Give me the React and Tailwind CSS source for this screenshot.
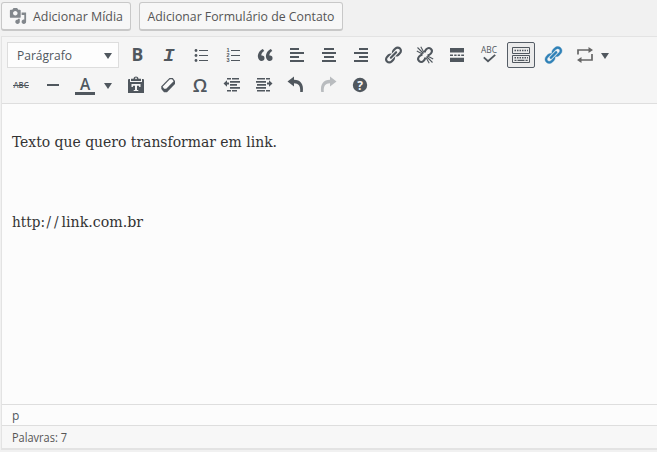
import React from "react";

const LINK =
  "M17.74 2.76c1.68 1.69 1.68 4.41 0 6.1l-1.53 1.52c-1.12 1.12-2.7 1.47-4.14 1.09l2.62-2.61.76-.77.76-.76c.84-.84.84-2.2 0-3.04-.84-.85-2.2-.85-3.04 0l-.77.76-3.38 3.38c-.37-1.44-.02-3.02 1.1-4.14l1.52-1.53c1.69-1.68 4.42-1.68 6.1 0zM8.59 13.43l5.34-5.34c.42-.42.42-1.1 0-1.52-.44-.43-1.13-.39-1.53 0l-5.33 5.34c-.42.42-.42 1.1 0 1.52.44.43 1.13.39 1.52 0zm-.76 2.29l4.14-4.15c.38 1.44.03 3.02-1.09 4.14l-1.52 1.53c-1.69 1.68-4.41 1.68-6.1 0-1.68-1.68-1.68-4.42 0-6.1l1.53-1.52c1.12-1.12 2.7-1.47 4.14-1.1l-4.14 4.15c-.85.84-.85 2.2 0 3.05.84.84 2.2.84 3.04 0z";

function Icon({ children, className = "" }) {
  return (
    <svg viewBox="0 0 20 20" fill="currentColor" className={"h-5 w-5 shrink-0 overflow-visible " + className}>
      {children}
    </svg>
  );
}

function Tool({ children, active, className = "" }) {
  return (
    <button
      className={
        "flex h-[26px] w-7 shrink-0 items-center justify-center rounded-[2px] border " +
        (active ? "border-[#555d66] bg-[#ebebeb] " : "border-transparent ") +
        className
      }
    >
      {children}
    </button>
  );
}

const Caret = ({ className = "" }) => (
  <svg viewBox="0 0 8 6" fill="#50575e" className={"h-1.5 w-2 shrink-0 " + className}>
    <path d="M0 0h8L4 6z" />
  </svg>
);

const Undo = () => <path d="M8 1.5v3.200c6.500 0 10 4.300 8.800 12.300h-2.600c.5-6-1.700-8.700-6.200-8.700v3.200L1.500 6.500z" />;

export default function App() {
  return (
    <div className="flex h-[452px] w-[657px] flex-col overflow-hidden bg-[#f1f1f1] font-['Open_Sans','Noto_Sans',sans-serif] text-[#50575e]">
      <div className="flex h-9 shrink-0 gap-2 pl-px pt-0.5">
        <button className="flex h-[29px] w-[130px] items-center rounded-[3px] border border-b-2 border-[#c8c8c8] bg-[#f7f7f7] pl-[7px]">
          <Icon className="mr-[6px] h-[18px] w-[18px] text-[#82878c]">
            <path d="M13 11V4c0-.55-.45-1-1-1h-1.670L9 1H5L3.670 3H2c-.55 0-1 .45-1 1v7c0 .55.45 1 1 1h10c.55 0 1-.45 1-1zM7 4.500c1.380 0 2.500 1.120 2.500 2.500S8.380 9.500 7 9.500 4.500 8.380 4.500 7 5.620 4.500 7 4.500zM14 6h5v10.500c0 1.380-1.120 2.500-2.500 2.500S14 17.880 14 16.500s1.120-2.500 2.500-2.500c.17 0 .34.02.5.05V9h-3V6zm-4 8.050V13h2v3.500c0 1.380-1.120 2.500-2.500 2.500S7 17.880 7 16.500 8.120 14 9.500 14c.17 0 .34.02.5.05z" />
          </Icon>
          <svg className="h-5 w-[90px] overflow-visible" fill="#555">
            <text x="0" y="15" fontSize="13" textLength="90" lengthAdjust="spacingAndGlyphs">Adicionar Mídia</text>
          </svg>
        </button>
        <button className="flex h-[29px] w-[204px] items-center rounded-[3px] border border-b-2 border-[#c8c8c8] bg-[#f7f7f7] pl-[7px]">
          <svg className="h-5 w-[188px] overflow-visible" fill="#555">
            <text x="0.5" y="15" fontSize="13" textLength="187" lengthAdjust="spacingAndGlyphs">Adicionar Formulário de Contato</text>
          </svg>
        </button>
      </div>

      <div className="ml-px flex h-[414px] shrink-0 flex-col border-b-2 border-l border-t border-[#e3e3e3] bg-[#fcfcfc]">
        <div className="flex h-[67px] shrink-0 flex-col gap-1 border-b border-[#dedede] bg-[#f5f5f5] pt-[5px]">
          <div className="flex h-[26px] items-center gap-1 pl-[5px]">
            <button className="flex h-[26px] w-28 items-center justify-between border border-[#ddd] bg-[#fdfdfd] pl-[9px] pr-[6px]">
              <svg className="h-5 w-[56px] overflow-visible" fill="#50575e">
                <text x="0" y="15" fontSize="12.500" textLength="55" lengthAdjust="spacingAndGlyphs">Parágrafo</text>
              </svg>
              <Caret className="mt-px" />
            </button>
            <Tool>
              <Icon><text x="10.500" y="16.300" textAnchor="middle" fontSize="17.500" fontWeight="700">B</text></Icon>
            </Tool>
            <Tool>
              <Icon><text x="10" y="16.300" textAnchor="middle" fontSize="19" fontWeight="700" fontStyle="italic" fontFamily="Liberation Mono">I</text></Icon>
            </Tool>
            <Tool>
              <Icon>
                <circle cx="5" cy="5.500" r="1.400" /><circle cx="5" cy="10.500" r="1.400" /><circle cx="5" cy="15.500" r="1.400" />
                <path d="M8 5h9v1H8zM8 10h9v1H8zM8 15h9v1H8z" />
              </Icon>
            </Tool>
            <Tool>
              <Icon>
                <path d="M8 5h9v1H8zM8 10h9v1H8zM8 15h9v1H8z" />
                <g fontSize="5.500" fontWeight="700" fontFamily="Liberation Sans">
                  <text x="3.500" y="7">1</text><text x="3.500" y="12.200">2</text><text x="3.500" y="17.400">3</text>
                </g>
              </Icon>
            </Tool>
            <Tool>
              <Icon>
                <path d="M9.490 13.220c0-.74-.2-1.380-.61-1.900-.62-.78-1.830-.88-2.530-.72-.29-1.650 1.110-3.750 2.920-4.650L7.880 4c-2.730 1.300-5.420 4.280-4.960 8.050C3.210 14.430 4.590 16 6.540 16c.85 0 1.560-.25 2.120-.75s.83-1.180.83-2.030zm8.050 0c0-.74-.2-1.380-.61-1.900-.63-.78-1.830-.88-2.530-.72-.29-1.650 1.110-3.750 2.920-4.650L15.930 4c-2.730 1.300-5.410 4.280-4.950 8.050.29 2.380 1.660 3.950 3.610 3.950.85 0 1.560-.25 2.120-.75s.83-1.180.83-2.030z" />
              </Icon>
            </Tool>
            <Tool><Icon><path d="M3 3h9v2H3zM3 7h14v2H3zM3 11h9v2H3zM3 15h14v2H3z" /></Icon></Tool>
            <Tool><Icon><path d="M5 3h10v2H5zM3 7h14v2H3zM5 11h10v2H5zM3 15h14v2H3z" /></Icon></Tool>
            <Tool><Icon><path d="M8 3h9v2H8zM3 7h14v2H3zM8 11h9v2H8zM3 15h14v2H3z" /></Icon></Tool>
            <Tool><Icon><path d={LINK} /></Icon></Tool>
            <Tool>
              <Icon>
                <g fill="none" stroke="currentColor">
                  <path strokeWidth="2" d="M9.800 7.500c0-1.500.5-2.200 1.500-3.200 3-3 7.500.5 4.700 4-1 1.200-1.800 1.900-3.500 1.900M10.200 12.500c0 1.500-.5 2.200-1.500 3.200-3 3-7.500-.5-4.700-4 1-1.200 1.800-1.900 3.500-1.900" />
                  <path strokeWidth="1.100" d="M2.500 2.500L8.500 8.500M5.800 1.800l3 5.500M1.800 6L7.500 9M17.500 17.500l-6-6M14.200 18.200l-3-5.500M18.200 14l-5.700-3" />
                </g>
              </Icon>
            </Tool>
            <Tool><Icon><path d="M3 3h14v4.500H3zM3 9.500h3v1.500H3zM7.200 9.500h2.400v1.500H7.200zM10.700 9.500h2.400v1.500h-2.400zM14.200 9.500H17v1.500h-2.800zM3 12.800h14V17H3z" /></Icon></Tool>
            <Tool>
              <Icon>
                <text x="10" y="8" textAnchor="middle" fontSize="8.500" textLength="16" lengthAdjust="spacingAndGlyphs">ABC</text>
                <path fill="none" stroke="currentColor" strokeWidth="1.800" d="M4.800 12.300l4.200 3.900 7.200-6.400" />
              </Icon>
            </Tool>
            <Tool active>
              <Icon>
                <path fill="none" stroke="currentColor" d="M1.500 2.500h17v6h-17zM1.500 10.500h17v7h-17z" />
                <path fill="none" stroke="currentColor" strokeWidth="1.600" strokeDasharray="1.500 1" d="M3.500 5.500h13.500M3.500 12.800h13.500" />
                <path fill="none" stroke="currentColor" strokeWidth="1.300" d="M3.500 15.300h2M6.500 15.300h7M14.500 15.300h2.200" />
              </Icon>
            </Tool>
            <Tool><Icon className="text-[#2f81b7]"><path stroke="currentColor" strokeWidth=".4" d={LINK} /></Icon></Tool>
            <Tool>
              <Icon className="text-[#666]">
                <path fill="none" stroke="currentColor" strokeWidth="1.700" d="M3 9.500V5h11M17 9V15H6" />
                <path d="M13.500 2l4.500 3-4.500 3zM6.500 12L2 15l4.500 3z" />
              </Icon>
            </Tool>
            <Caret className="-ml-0.5 mt-0.5" />
          </div>

          <div className="flex h-[26px] items-center gap-1 pl-[5px]">
            <Tool>
              <Icon>
                <text x="10" y="13" textAnchor="middle" fontSize="8" fontWeight="600" textLength="15" lengthAdjust="spacingAndGlyphs">ABC</text>
                <path d="M2 10h16v1H2z" />
              </Icon>
            </Tool>
            <Tool><Icon><path d="M4 9h12v2H4z" /></Icon></Tool>
            <Tool>
              <Icon>
                <text x="10" y="15" textAnchor="middle" fontSize="15.500" fontWeight="600">A</text>
                <path d="M0 17h20v3H0z" />
              </Icon>
            </Tool>
            <Caret className="ml-px mr-[6px] mt-px" />
            <Tool>
              <Icon>
                <path d="M3 4h14a1 1 0 011 1v13H2V5a1 1 0 011-1z" />
                <path fill="#f5f5f5" d="M4 3h12v4H4z" />
                <path d="M5 6V3.800h2.500c.3-3 4.700-3 5 0H15V6z" />
                <circle cx="10" cy="3.400" r=".8" fill="#f5f5f5" />
                <path fill="#f5f5f5" d="M5.500 9h9v3h-1.200l-.5-1.200H11v4.200h1.300v1H7.700v-1H9v-4.200H7.200L6.700 12H5.500z" />
              </Icon>
            </Tool>
            <Tool>
              <Icon>
                <path d="M11.500 3h3.300L17 6v3l-8 8.300H6L3.300 14v-2.700z" />
                <path fill="#fafafa" d="M11.900 4.200h2.200l1.500 2-7.400 7.600H6.100l-1.500-2z" />
              </Icon>
            </Tool>
            <Tool><Icon><text x="10" y="17" textAnchor="middle" fontSize="18.500" fontWeight="600">Ω</text></Icon></Tool>
            <Tool>
              <Icon><path d="M5 3h4v1.500H5zM10 3h7v1.500h-7zM8 6h10v1.800H8zM8 9h7v1.800H8zM8 12h10v1.800H8zM5 15h4v1.500H5zM10 15h5v1.500h-5zM1.500 8.500L5 5.200v2.300h2v2H5v2.300z" /></Icon>
            </Tool>
            <Tool>
              <Icon><path d="M3 3h8v1.500H3zM12 3h4v1.500h-4zM2 6h10v1.800H2zM3 9h9v1.800H3zM2 12h10v1.800H2zM3 15h8v1.500H3zM12 15h4v1.500h-4zM18.500 8.500L15 5.200v2.300h-2v2h2v2.300z" /></Icon>
            </Tool>
            <Tool><Icon><Undo /></Icon></Tool>
            <Tool><Icon className="-scale-x-100 text-[#b9bcbf]"><Undo /></Icon></Tool>
            <Tool>
              <Icon>
                <circle cx="10" cy="10" r="7.200" />
                <text x="10" y="14.500" textAnchor="middle" fontSize="12" fontWeight="700" fill="#f5f5f5">?</text>
              </Icon>
            </Tool>
          </div>
        </div>

        <div className="flex grow flex-col gap-14 pl-2.5 pt-[26px] text-[#333]">
          <svg className="h-6 w-[266px] overflow-visible" fill="#333" fontFamily="'DejaVu Serif Condensed','DejaVu Serif',serif">
            <text x="0" y="17" fontSize="15" textLength="265" lengthAdjust="spacingAndGlyphs">Texto que quero transformar em link.</text>
          </svg>
          <svg className="h-6 w-[132px] overflow-visible" fill="#333" fontFamily="'DejaVu Serif Condensed','DejaVu Serif',serif">
            <text y="17" fontSize="15">
              <tspan x="0" textLength="33" lengthAdjust="spacingAndGlyphs">http:</tspan>
              <tspan x="34.500 42">//</tspan>
              <tspan x="49.500" textLength="81.500" lengthAdjust="spacingAndGlyphs">link.com.br</tspan>
            </text>
          </svg>
        </div>

        <div className="flex h-[21px] shrink-0 items-center border-t border-[#dedede] pl-2.5 pt-0.5 text-xs">p</div>
        <div className="flex h-[23px] shrink-0 items-center border-t border-[#dedede] bg-[#f7f7f7] pl-2.5">
          <svg className="h-4 w-[56px] overflow-visible" fill="#555">
            <text x="0" y="12.500" fontSize="12" textLength="55" lengthAdjust="spacingAndGlyphs">Palavras: 7</text>
          </svg>
        </div>
      </div>
    </div>
  );
}
